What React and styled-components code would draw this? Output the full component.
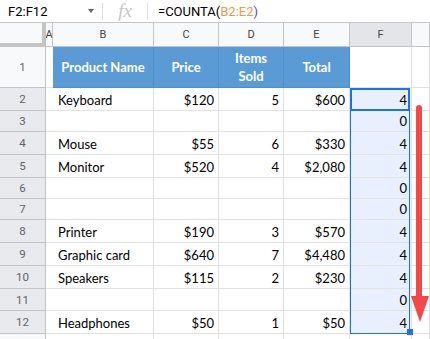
import React from "react";
import styled, { createGlobalStyle } from "styled-components";

const GlobalStyle = createGlobalStyle`
  body {
    margin: 0;
    background: #fff;
    font-family: "Liberation Sans", Arial, sans-serif;
  }
`;

const Page = styled.div`
  width: 430px;
  height: 339px;
  overflow: hidden;
  background: #fff;
`;

const FormulaBar = styled.div`
  display: flex;
  align-items: center;
  height: 23px;
  box-sizing: border-box;
  border-bottom: 1px solid #c7c7c7;
  font-family: Roboto, "Liberation Sans", sans-serif;
  font-size: 13px;
  color: #000;
`;

const NameBox = styled.div`
  width: 103px;
  height: 17px;
  box-sizing: border-box;
  padding: 0 8px;
  display: flex;
  align-items: center;
  justify-content: space-between;
  border-right: 1px solid #e0e0e0;
`;

const Caret = styled.span`
  width: 0;
  height: 0;
  border-left: 3.5px solid transparent;
  border-right: 3.5px solid transparent;
  border-top: 4px solid #666;
`;

const FxBox = styled.div`
  width: 44px;
  height: 17px;
  display: flex;
  align-items: center;
  justify-content: center;
  border-right: 1px solid #e0e0e0;
  font-family: "Liberation Serif", serif;
  font-style: italic;
  font-size: 19px;
  color: #c4c4c4;
`;

const Formula = styled.div`
  padding-left: 10px;
  white-space: pre;
`;

const Ref = styled.span`
  color: ${(p) => p.$color};
`;

const Sheet = styled.div`
  position: relative;
  display: grid;
  grid-template-columns: 46px 7px 101px 65px 65px 66px 62px 1fr;
  grid-template-rows: 24px 41px 23px 21px 23px 23px 21px 21px 23px 23px 23px 22px 23px 23px;
`;

const Corner = styled.div`
  background: #f8f9fa;
  border-right: 4px solid #c4c4c4;
  border-bottom: 4px solid #c4c4c4;
  box-sizing: border-box;
`;

const ColHead = styled.div`
  background: ${(p) => (p.$selected ? "#e3e5e8" : "#f8f9fa")};
  border-right: 1px solid #c4c4c4;
  border-bottom: 1px solid #c4c4c4;
  box-sizing: border-box;
  display: flex;
  align-items: center;
  justify-content: center;
  font-family: Roboto, "Liberation Sans", sans-serif;
  font-size: 11px;
  color: #444;
  overflow: hidden;
`;

const RowHead = styled.div`
  background: ${(p) => (p.$selected ? "#e8eaed" : "#f8f9fa")};
  border-right: 1px solid #c4c4c4;
  border-bottom: 1px solid #c4c4c4;
  box-sizing: border-box;
  display: flex;
  align-items: center;
  justify-content: center;
  font-family: Roboto, "Liberation Sans", sans-serif;
  font-size: 11.5px;
  color: #5f6368;
`;

const Cell = styled.div`
  background: ${(p) => (p.$selected ? "#e8f0fe" : "#fff")};
  border-right: 1px solid #e2e2e2;
  border-bottom: 1px solid #e2e2e2;
  box-sizing: border-box;
  display: flex;
  align-items: flex-end;
  justify-content: ${(p) => (p.$right ? "flex-end" : "flex-start")};
  padding: 0 4px 2px 5px;
  font-family: Lato, "Liberation Sans", sans-serif;
  font-size: 13px;
  line-height: 16px;
  color: #000;
  white-space: nowrap;
  overflow: hidden;
`;

const HeadCell = styled.div`
  background: #5b9bd5;
  border-right: 1px solid #4f8fc9;
  border-bottom: 1px solid #4f8fc9;
  box-sizing: border-box;
  display: flex;
  align-items: center;
  justify-content: center;
  text-align: center;
  font-family: Lato, "Liberation Sans", sans-serif;
  font-weight: 700;
  font-size: 13px;
  line-height: 18px;
  color: #fff;
`;

const Range = styled.div`
  position: absolute;
  left: 350px;
  top: 65px;
  width: 60px;
  height: 246px;
  box-sizing: border-box;
  border: 1px solid #1a73e8;
  pointer-events: none;
`;

const Active = styled.div`
  position: absolute;
  left: 350px;
  top: 65px;
  width: 60px;
  height: 23px;
  box-sizing: border-box;
  border: 2px solid #1a73e8;
  pointer-events: none;
`;

const Handle = styled.div`
  position: absolute;
  left: 407px;
  top: 306px;
  width: 6px;
  height: 6px;
  background: #1a73e8;
`;

const Arrow = styled.svg`
  position: absolute;
  left: 408px;
  top: 77px;
`;

const rows = [
  { n: 2, name: "Keyboard", price: "$120", sold: "5", total: "$600", f: "4" },
  { n: 3, f: "0" },
  { n: 4, name: "Mouse", price: "$55", sold: "6", total: "$330", f: "4" },
  { n: 5, name: "Monitor", price: "$520", sold: "4", total: "$2,080", f: "4" },
  { n: 6, f: "0" },
  { n: 7, f: "0" },
  { n: 8, name: "Printer", price: "$190", sold: "3", total: "$570", f: "4" },
  { n: 9, name: "Graphic card", price: "$640", sold: "7", total: "$4,480", f: "4" },
  { n: 10, name: "Speakers", price: "$115", sold: "2", total: "$230", f: "4" },
  { n: 11, f: "0" },
  { n: 12, name: "Headphones", price: "$50", sold: "1", total: "$50", f: "4" },
];

function DataRow({ row }) {
  return (
    <>
      <RowHead $selected>{row.n}</RowHead>
      <Cell />
      <Cell>{row.name}</Cell>
      <Cell $right>{row.price}</Cell>
      <Cell $right>{row.sold}</Cell>
      <Cell $right>{row.total}</Cell>
      <Cell $right $selected>{row.f}</Cell>
      <Cell />
    </>
  );
}

export default function App() {
  return (
    <Page>
      <GlobalStyle />
      <FormulaBar>
        <NameBox>
          <span>F2:F12</span>
          <Caret />
        </NameBox>
        <FxBox>fx</FxBox>
        <Formula>
          =COUNTA(<Ref $color="#f09a45">B2:E2</Ref>
          <Ref $color="#6b3fa0">)</Ref>
        </Formula>
      </FormulaBar>
      <Sheet>
        <Corner />
        <ColHead>A</ColHead>
        <ColHead>B</ColHead>
        <ColHead>C</ColHead>
        <ColHead>D</ColHead>
        <ColHead>E</ColHead>
        <ColHead $selected>F</ColHead>
        <ColHead />

        <RowHead>1</RowHead>
        <Cell />
        <HeadCell>Product Name</HeadCell>
        <HeadCell>Price</HeadCell>
        <HeadCell>
          Items
          <br />
          Sold
        </HeadCell>
        <HeadCell>Total</HeadCell>
        <Cell />
        <Cell />

        {rows.map((r) => (
          <DataRow key={r.n} row={r} />
        ))}

        <RowHead />
        <Cell />
        <Cell />
        <Cell />
        <Cell />
        <Cell />
        <Cell />
        <Cell />

        <Range />
        <Active />
        <Handle />
        <Arrow width="22" height="230" viewBox="0 0 22 230">
          <line x1="11" y1="8" x2="11" y2="198" stroke="#f44848" strokeWidth="6" strokeLinecap="round" />
          <polygon points="3,196 21,196 12,222" fill="#f44848" />
        </Arrow>
      </Sheet>
    </Page>
  );
}
